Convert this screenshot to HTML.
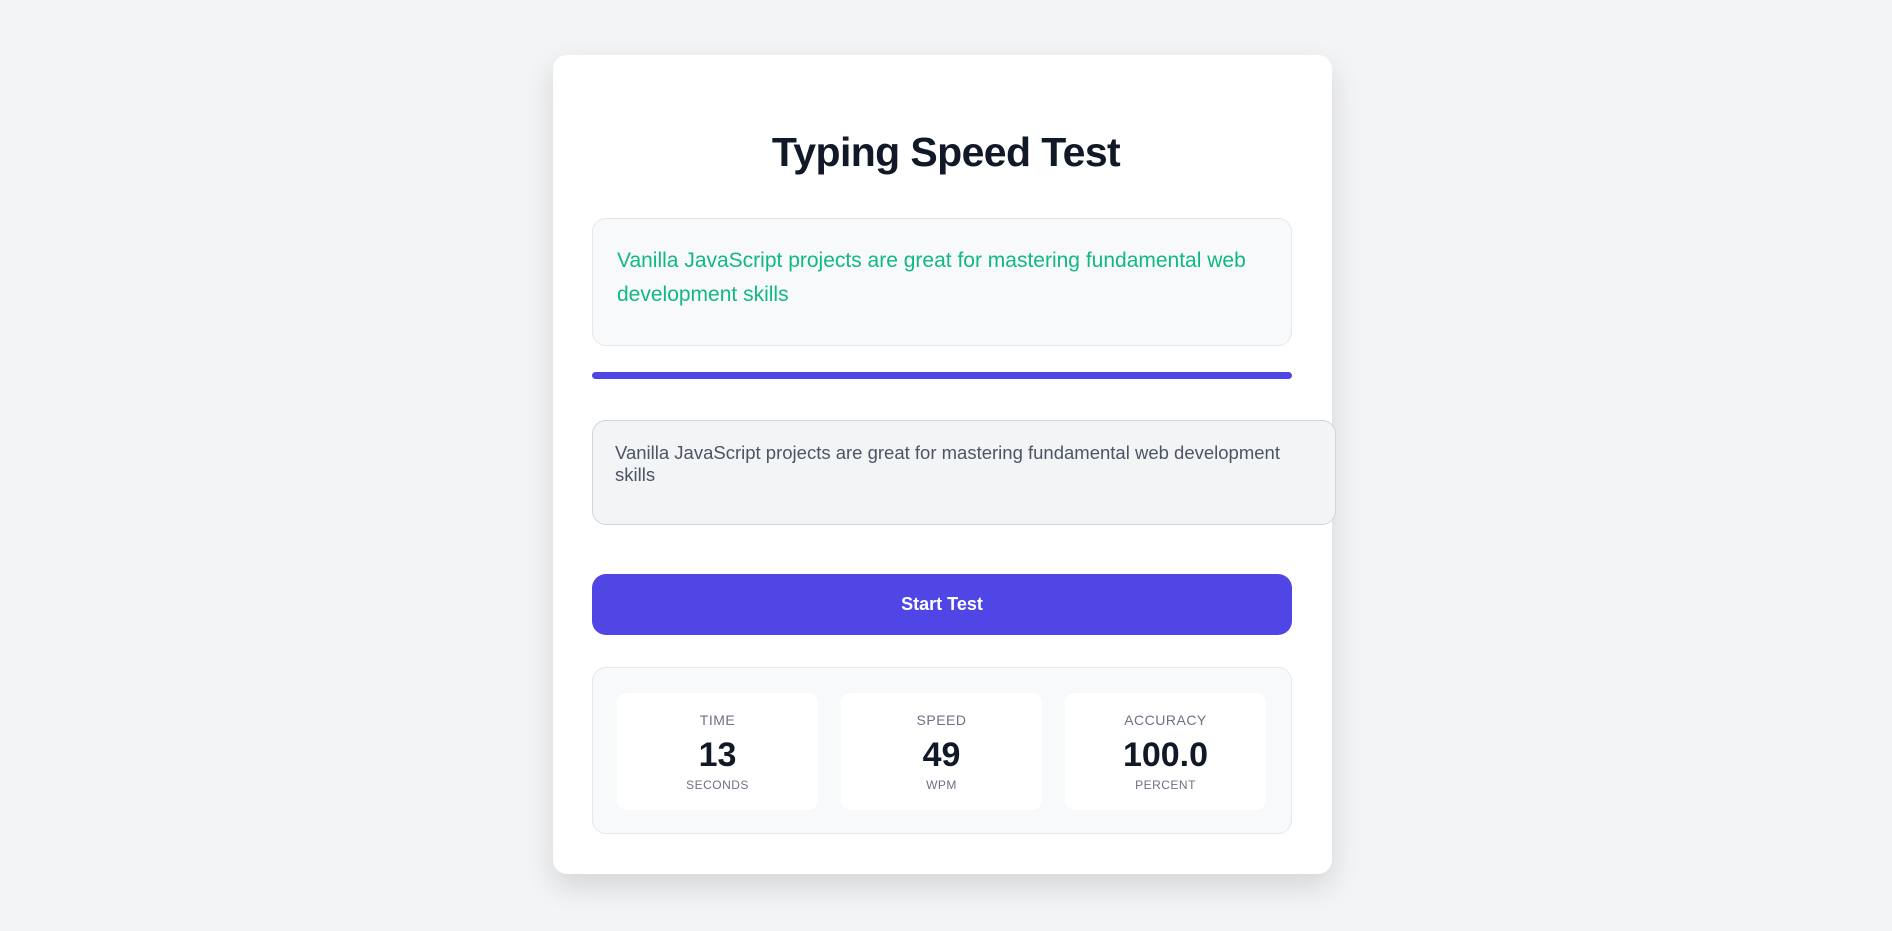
<!DOCTYPE html>
<html><head><meta charset="utf-8"><style>
*{box-sizing:border-box;margin:0;padding:0}
body{width:1892px;height:931px;background:#f3f4f6;font-family:"Liberation Sans",sans-serif;position:relative;overflow:hidden}
.card{position:absolute;left:553px;top:55px;width:779px;height:819px;background:#fff;border-radius:14px;box-shadow:0 12px 30px rgba(0,0,0,.13)}
.abs{position:absolute}
h1{position:absolute;left:0;right:0;top:127px;text-align:center;font-size:41px;font-weight:700;color:#111827;letter-spacing:-0.6px;line-height:50px}
.quote{left:592px;top:218px;width:700px;height:128px;background:#f8f9fb;border:1px solid #e5e7eb;border-radius:14px;padding:25px 24px;color:#10b981;font-size:21px;line-height:34px}
.bar{left:592px;top:372px;width:700px;height:7px;background:#4f46e5;border-radius:4px}
.ta{left:592px;top:420px;width:744px;height:105px;background:#f3f4f6;border:1px solid #d1d5db;border-radius:14px;padding:21px 40px 20px 22px;color:#4b5563;font-size:18.5px;line-height:22px}
.btn{left:592px;top:574px;width:700px;height:61px;background:#4f46e5;border-radius:14px;color:#fff;font-weight:700;font-size:18px;text-align:center;line-height:61px}
.stats{left:592px;top:667px;width:700px;height:167px;background:#f8f9fb;border:1px solid #e5e7eb;border-radius:14px}
.st{top:693px;width:201px;height:117px;background:#fff;border-radius:10px;text-align:center;color:#6b7280}
.l{font-size:14px;margin-top:19px;line-height:16px;letter-spacing:.5px}
.v{font-size:34px;font-weight:700;color:#111827;line-height:36px;margin-top:9px}
.u{font-size:12px;line-height:14px;margin-top:5px;letter-spacing:.5px}
</style></head><body>
<div class="card"></div>
<h1>Typing Speed Test</h1>
<div class="abs quote">Vanilla JavaScript projects are great for mastering fundamental web development skills</div>
<div class="abs bar"></div>
<div class="abs ta">Vanilla JavaScript projects are great for mastering fundamental web development skills</div>
<div class="abs btn">Start Test</div>
<div class="abs stats"></div>
<div class="abs st" style="left:617px"><div class="l">TIME</div><div class="v">13</div><div class="u">SECONDS</div></div>
<div class="abs st" style="left:841px"><div class="l">SPEED</div><div class="v">49</div><div class="u">WPM</div></div>
<div class="abs st" style="left:1065px"><div class="l">ACCURACY</div><div class="v">100.0</div><div class="u">PERCENT</div></div>
</body></html>
